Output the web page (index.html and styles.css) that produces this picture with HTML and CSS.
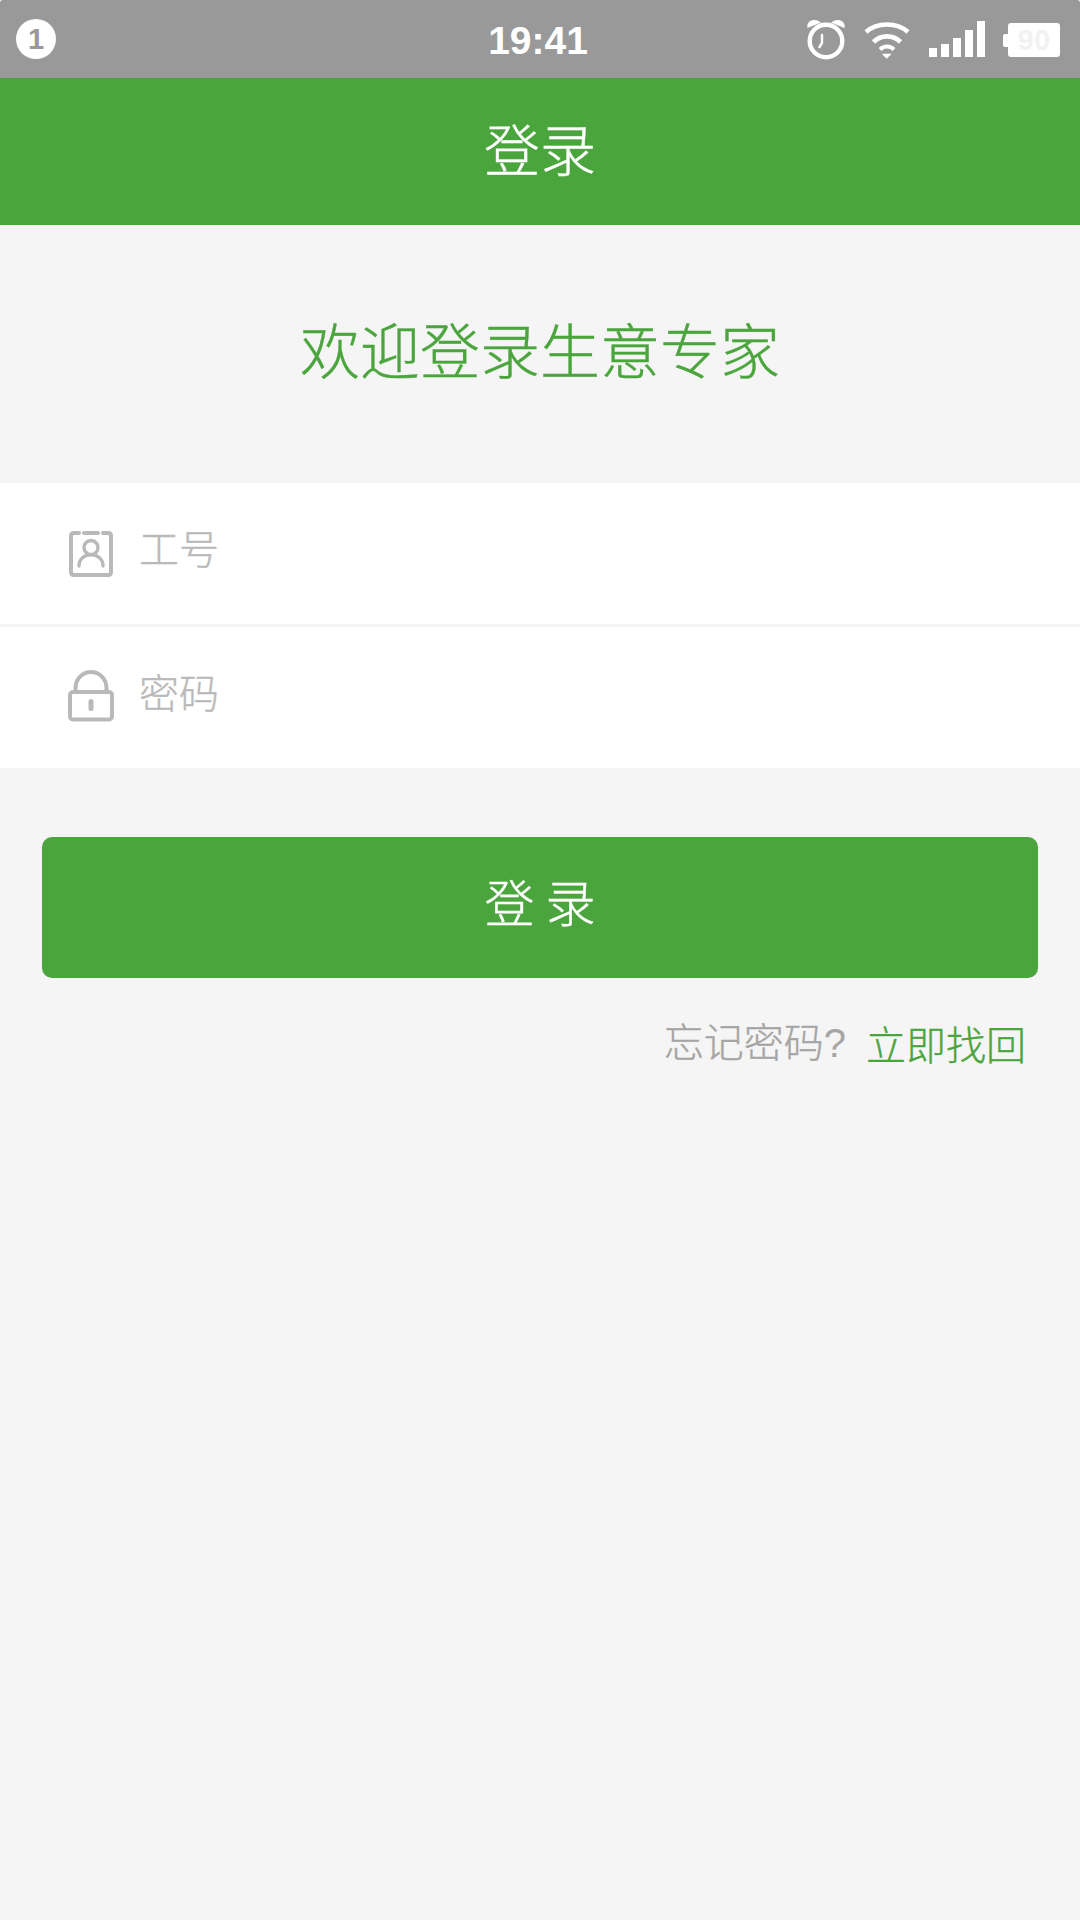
FILE: index.html
```html
<!DOCTYPE html>
<html lang="zh-CN">
<head>
<meta charset="utf-8">
<title>登录</title>
<link rel="stylesheet" href="styles.css">
</head>
<body>
<div class="status">
  <div class="status-left"><span class="badge">1</span></div>
  <div class="time">19:41</div>
  <div class="status-right">
    <svg class="ic-alarm" width="40" height="42" viewBox="0 0 40 42">
      <circle cx="20" cy="23" r="16.300" fill="none" stroke="#fff" stroke-width="4.400"/>
      <path d="M16 17V25L13.500 29" fill="none" stroke="#fff" stroke-width="2.400" stroke-linecap="round" stroke-linejoin="round"/>
      <path d="M1.500 10C0 3 8 -1 15 4.500ZM38.500 10C40 3 32 -1 25 4.500Z" fill="#fff"/>
    </svg>
    <svg class="ic-wifi" width="48" height="38" viewBox="0 0 48 38">
      <path d="M3 11C14 1 34 1 45 11M10.500 21C18 13.500 30 13.500 37.500 21" fill="none" stroke="#fff" stroke-width="4.600"/>
      <path d="M17 28.500C21 24.500 27 24.500 31 28.500" fill="none" stroke="#fff" stroke-width="4"/>
      <path d="M18.700 32.700H28.700L23.700 37.700Z" fill="#fff"/>
    </svg>
    <div class="signal">
      <i class="b1"></i><i class="b2"></i><i class="b3"></i><i class="b4"></i><i class="b5"></i>
    </div>
    <div class="battery"><span class="nub"></span><span class="cell">90</span></div>
  </div>
</div>
<header class="nav">登录</header>
<h1 class="welcome">欢迎登录生意专家</h1>
<form class="form">
  <label class="row">
    <svg class="field-ic" width="46" height="50" viewBox="0 0 46 50">
      <path d="M11 4H6Q3 4 3 7V43Q3 46 6 46H40Q43 46 43 43V7Q43 4 40 4H35M16 4H30" fill="none" stroke="#b9b9b9" stroke-width="4" stroke-linecap="round"/>
      <circle cx="23" cy="18.500" r="7" fill="none" stroke="#b9b9b9" stroke-width="3.400"/>
      <path d="M11 37C11 22 35 22 35 37" fill="none" stroke="#b9b9b9" stroke-width="3.400" stroke-linecap="round"/>
    </svg>
    <input class="field" type="text" placeholder="工号">
  </label>
  <label class="row row-2">
    <svg class="field-ic lock" width="46" height="54" viewBox="0 0 46 54">
      <path d="M7.500 22V18A15.500 16 0 0 1 38.500 18V22" fill="none" stroke="#b9b9b9" stroke-width="4"/>
      <rect x="2" y="22" width="42" height="27.500" rx="3" fill="none" stroke="#b9b9b9" stroke-width="4"/>
      <rect x="20.500" y="29" width="5" height="12" rx="2.500" fill="#b9b9b9"/>
    </svg>
    <input class="field" type="password" placeholder="密码">
  </label>
</form>
<button class="submit" type="button">登 录</button>
<div class="forgot"><span class="q">忘记密码<span class="qm">?</span></span><a class="link">立即找回</a></div>
</body>
</html>
```
FILE: styles.css
```css
* { box-sizing: border-box; margin: 0; padding: 0; }
html, body { height: 100%; }
body {
  background: #f5f5f5;
  font-family: "Noto Sans CJK SC", "Liberation Sans", sans-serif;
  font-weight: 300;
  -webkit-text-stroke: 0.35px currentColor;
  display: flex;
  flex-direction: column;
}
.status {
  height: 78px;
  background: #999;
  display: grid;
  grid-template-columns: 1fr auto 1fr;
  align-items: center;
  padding: 0 20px 0 16px;
  color: #fff;
  border-radius: 3px 3px 0 0;
  -webkit-text-stroke: 0;
}
.status-left { display: flex; }
.badge {
  width: 40px; height: 40px; border-radius: 50%;
  background: #fff; color: #999;
  font: bold 29px/40px "Liberation Sans", sans-serif;
  text-align: center;
}
.time { font: bold 39px/44px "Liberation Sans", sans-serif; position: relative; top: 2px; }
.status-right { display: flex; justify-content: flex-end; align-items: flex-end; height: 42px; padding-bottom: 3px; }
.ic-alarm { margin-bottom: -3px; }
.ic-wifi { margin-left: 17px; margin-bottom: -2px; }
.signal { display: flex; align-items: flex-end; gap: 4px; margin-left: 18px; }
.signal i { display: block; width: 8px; background: #fff; }
.b1 { height: 9px; } .b2 { height: 13px; } .b3 { height: 19px; } .b4 { height: 27px; } .b5 { height: 36px; }
.battery { display: flex; align-items: center; margin-left: 18px; }
.nub { width: 5px; height: 13px; background: #fff; border-radius: 2px 0 0 2px; }
.cell {
  width: 52px; height: 34px; background: #fff; border-radius: 3px;
  color: #f2f2f2; font: bold 29px/34px "Liberation Sans", sans-serif; text-align: center;
}
.nav {
  height: 147px; background: #4ba53d; color: #fff;
  font-size: 56px; line-height: 137px; text-align: center;
}
.welcome {
  height: 258px; color: #4ba53d;
  font-size: 60px; font-weight: 300; line-height: 246px; text-align: center;
}
.form { display: flex; flex-direction: column; gap: 3px; }
.row {
  height: 141px; background: #fff;
  display: flex; align-items: center; padding-left: 68px; gap: 26px;
}
.field-ic { flex: none; }
.lock { position: relative; top: -1px; }
.field {
  flex: 1; min-width: 0; border: 0; outline: 0; background: transparent;
  font: 300 40px/56px "Noto Sans CJK SC", sans-serif; color: #333; height: 56px;
  position: relative; top: -7px; margin-left: -1px;
}
.field::placeholder { color: #b9b9b9; opacity: 1; -webkit-text-stroke: 0.35px #b9b9b9; }
.submit {
  margin: 69px 42px 0; height: 141px; flex: none;
  background: #4ba53d; color: #fff; border: 0; border-radius: 10px;
  font: 300 50px/126px "Noto Sans CJK SC", sans-serif;
  padding-bottom: 15px;
}
.forgot {
  margin-top: 35px; padding-right: 54px;
  display: flex; justify-content: flex-end; gap: 20px;
  font-size: 40px; line-height: 60px;
}
.q { color: #a5a5a5; font-family: "Liberation Sans", "Noto Sans CJK SC", sans-serif; }
.qm { -webkit-text-stroke: 0; }
.link { color: #4ba53d; }
```
